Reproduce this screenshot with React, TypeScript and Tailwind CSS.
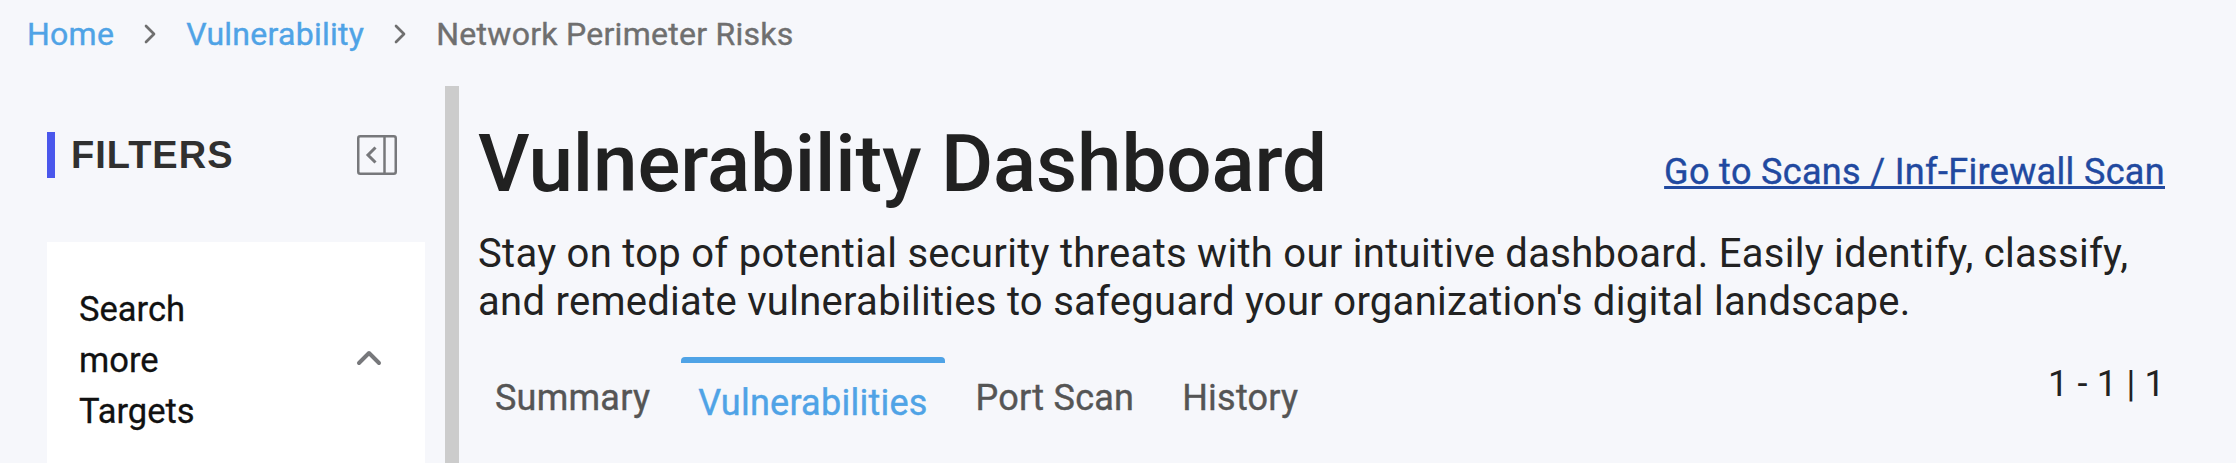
import { ChevronRight, ChevronUp } from "lucide-react";

const TABS = ["Summary", "Vulnerabilities", "Port Scan", "History"];

function CollapseIcon() {
  return (
    <svg viewBox="0 0 40 40" className="w-10 h-10" fill="none" stroke="#77787b" strokeWidth="2.5">
      <rect x="1.25" y="1.25" width="37.5" height="37.5" rx="2" />
      <path d="M27.5 1.25v37.5" />
      <path d="M18.5 12.5L11 20l7.5 7.5" strokeWidth="3" />
    </svg>
  );
}

function Sidebar() {
  return (
    <aside className="w-[445px] shrink-0 pl-[47px] pr-5">
      <div className="flex items-center justify-between mt-[46px] h-[46px] pr-[28px]">
        <div className="flex items-center h-full border-l-8 border-[#4a57ec] pl-[16px]">
          <span className="font-['Liberation_Sans',sans-serif] font-bold text-[38px] tracking-[1px] text-[#303030]">
            FILTERS
          </span>
        </div>
        <CollapseIcon />
      </div>
      <div className="bg-white mt-[64px] h-[300px] pl-8 pr-[36px] pt-[42px] flex justify-between">
        <div className="text-[34.5px] [-webkit-text-stroke:0.3px] leading-[51px] text-[#111111] w-[130px]">
          Search more Targets
        </div>
        <ChevronUp className="w-10 h-10 mt-[54px] text-[#77787b]" strokeWidth={2.4} />
      </div>
    </aside>
  );
}

function Tabs() {
  return (
    <div className="flex justify-between items-start mt-[31px]">
      <div className="flex gap-[14px]">
        {TABS.map((tab) => {
          const active = tab === "Vulnerabilities";
          return (
            <div
              key={tab}
              className={
                active
                  ? "border-t-[6px] border-[#4fa3e6] rounded-t-[4px] px-[17px] pt-[13px] text-[#4fa3e6] text-[36px] [-webkit-text-stroke:0.4px] tracking-[0.24px]"
                  : "border-t-[6px] border-transparent px-[17px] pt-[8px] text-[#555555] text-[36px] [-webkit-text-stroke:0.4px] tracking-[0.24px]"
              }
            >
              {tab}
            </div>
          );
        })}
      </div>
      <div className="text-[36px] tracking-[0.2px] text-[#222222]">1 - 1 | 1</div>
    </div>
  );
}

export default function App() {
  return (
    <div className="h-[463px] w-[2236px] overflow-hidden bg-[#f6f7fb] font-['Roboto',sans-serif]">
      <nav className="h-[86px] pl-[27px] pt-[14px] flex items-start gap-[20px] text-[32px] [-webkit-text-stroke:0.4px] leading-[40px] tracking-[0.27px]">
        <a className="text-[#4fa3e6]">Home</a>
        <ChevronRight className="w-8 h-8 mt-1 text-[#6f6f6f]" />
        <a className="text-[#4fa3e6]">Vulnerability</a>
        <ChevronRight className="w-8 h-8 mt-1 text-[#6f6f6f]" />
        <span className="text-[#6f6f6f]">Network Perimeter Risks</span>
      </nav>
      <div className="flex">
        <Sidebar />
        <div className="w-[14px] shrink-0 bg-[#cccccc] h-[377px]" />
        <main className="w-[1706px] shrink-0 pl-[19px] pt-[31px]">
          <div className="flex justify-between items-end">
            <h1 className="text-[80px] leading-[94px] font-medium tracking-[-0.12px] text-[#212121]">
              Vulnerability Dashboard
            </h1>
            <a className="text-[36px] [-webkit-text-stroke:0.4px] tracking-[0.34px] text-[#2149a0] underline mb-[12px]">
              Go to Scans / Inf-Firewall Scan
            </a>
          </div>
          <p className="text-[40px] leading-[48px] tracking-[0.28px] text-[#222222] mt-[19px] w-[1680px]">
            Stay on top of potential security threats with our intuitive dashboard. Easily identify, classify, and
            remediate vulnerabilities to safeguard your organization's digital landscape.
          </p>
          <Tabs />
        </main>
      </div>
    </div>
  );
}
